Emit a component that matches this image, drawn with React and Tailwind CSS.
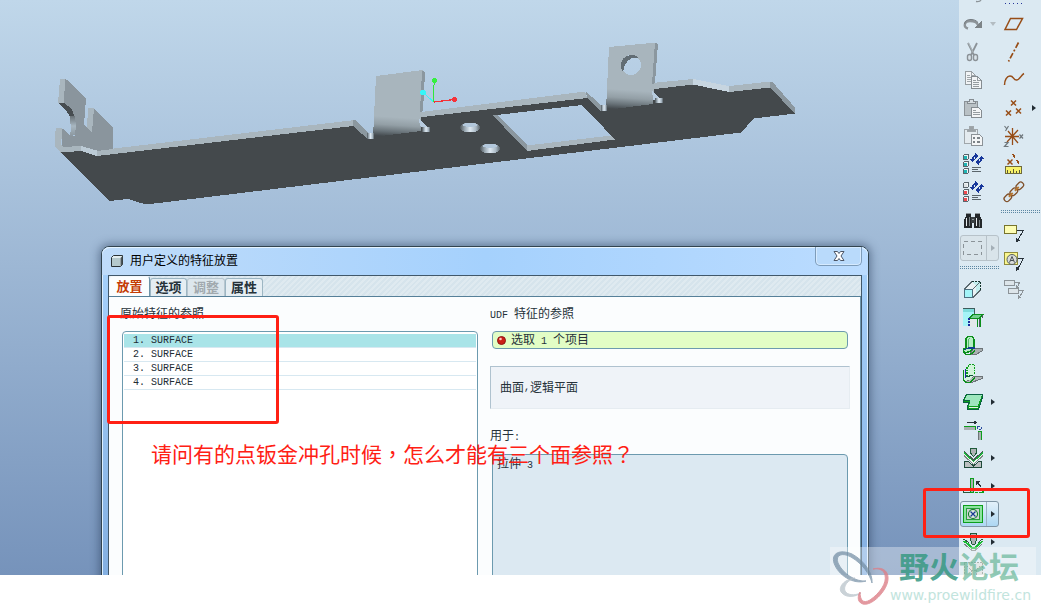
import React from "react";

const CJK = "font-['Liberation_Sans','Noto_Sans_CJK_SC',sans-serif]";

/* ---------- toolbar glyphs, all on a 24 x 24 grid ---------- */

const Svg = ({ children }) => (
  <svg viewBox="0 0 24 24" className="h-6 w-6 shrink-0" fill="none" stroke="none" shapeRendering="crispEdges">
    {children}
  </svg>
);

const Redo = () => (
  <Svg>
    <path d="M7 16.500C2 15 3 9 9 9C13 9 16 10 17 13" stroke="#8d9499" strokeWidth="2.4" shapeRendering="auto" />
    <path d="M3.500 12C4 8.500 7 7.500 10 7.500C13 7.500 15 8.500 17 10.500" stroke="#747b80" strokeWidth="1" shapeRendering="auto" />
    <path d="M21 9V16H13Z" fill="#7d8488" />
  </Svg>
);

const Scissors = () => (
  <Svg>
    <path d="M7 3L13 15M16 3L10 15" stroke="#8b9297" strokeWidth="1.8" shapeRendering="auto" />
    <path d="M7.5 3L12.5 13" stroke="#b8c0c4" strokeWidth="0.8" shapeRendering="auto" />
    <rect x="6.5" y="14.5" width="4" height="6" rx="2" stroke="#8b9297" fill="#d9e3e9" strokeWidth="1.4" shapeRendering="auto" />
    <rect x="12.5" y="14.5" width="4" height="6" rx="2" stroke="#8b9297" fill="#d9e3e9" strokeWidth="1.4" shapeRendering="auto" />
  </Svg>
);

const Copy = () => (
  <Svg>
    <path d="M4 3.500H10.500L14.500 7.500V16.500H4Z" fill="#f1f4f6" stroke="#969da1" />
    <path d="M10.500 3.500V7.500H14.500M6 7.500H9M6 9.500H11M6 11.500H11M6 13.500H11" stroke="#a0a7ab" />
    <path d="M10.500 8.500H16.500L20.500 12.500V20.500H10.500Z" fill="#f1f4f6" stroke="#858c91" />
    <path d="M16.500 8.500V12.500H20M12 12.500H15M12 14.500H18M12 16.500H18M12 18.500H18" stroke="#959ca0" />
  </Svg>
);

const Paste = () => (
  <Svg>
    <path d="M3.500 5.500H16.500V19.500H3.500Z" fill="#b9c1c5" stroke="#8b9297" />
    <path d="M6.500 7.500V5.500H8.500V3.500H12.500V5.500H14.500V7.500Z" fill="#d6dde1" stroke="#858c91" />
    <path d="M10.500 11.500H17.500L20.500 14.500V21.500H10.500Z" fill="#f3f5f6" stroke="#858c91" />
    <path d="M12 14.500H15M12 16.500H19M12 18.500H19" stroke="#959ca0" />
  </Svg>
);

const PasteSpecial = () => (
  <Svg>
    <path d="M3.500 5.500H16.500V19.500H3.500Z" fill="#e4ebef" stroke="#a0a7ab" />
    <path d="M6.500 7.500V5.500H8.500V2.500H12.500V5.500H14.500V7.500Z" fill="#9ba2a6" stroke="#a0a7ab" />
    <path d="M10.500 10.500H18.500L21.500 13.500V21.500H10.500Z" fill="#f3f5f6" stroke="#8b9297" />
    <path d="M12 14H14M16 14H19M12 18H14M16 18H19" stroke="#7c8388" strokeWidth="2" />
  </Svg>
);

const Cube = ({ y, fill }) => (
  <g>
    <path d={`M2.500 ${y + 1.500}L3.500 ${y + 0.500}H7.500V${y + 4.500}L6.500 ${y + 5.500}H2.500Z`} fill="#f0f4f5" stroke="#59656c" />
    <rect x="3" y={y + 2} width="3" height="3" fill={fill} />
  </g>
);

const Regenerate = ({ colors }) => (
  <Svg>
    <Cube y={2} fill={colors[0]} />
    <Cube y={9} fill={colors[1]} />
    <Cube y={16} fill={colors[2]} />
    <path d="M11.500 8C11.500 5.500 12.500 4 15 4" stroke="#17379b" strokeWidth="1.600" />
    <path d="M14 1V7L18 4Z" fill="#17379b" />
    <path d="M20.500 6C20.500 8.500 19.500 10 17 10" stroke="#17379b" strokeWidth="1.600" />
    <path d="M18 7V13L14 10Z" fill="#17379b" />
    <path d="M9 7H14L11.500 10ZM18 7L20.500 4L23 7Z" fill="#17379b" />
    <path d="M11 15.500H20M11 17.500H17M11 19.500H20" stroke="#5b656b" />
  </Svg>
);

const Binoculars = () => (
  <Svg>
    <path d="M5 5H10V9H11V20H3V12L5 8ZM14 5H19V8L21 12V20H13V9H14Z" fill="#24282b" />
    <path d="M10 9H14V15H10Z" fill="#3b4144" />
    <path d="M5.500 10V18M15.500 10V18" stroke="#e8edf0" strokeWidth="1.500" />
    <path d="M8.500 9V18M18.500 12V19" stroke="#7b8488" />
    <path d="M5 5.500H10M14 5.500H19M11 11.500H13" stroke="#8f979b" />
  </Svg>
);

const SelectBox = () => (
  <Svg>
    <rect x="2.500" y="5.500" width="18" height="13" stroke="#8b9398" strokeDasharray="4 3" />
  </Svg>
);

const Extrude = () => (
  <Svg>
    <path d="M3.500 11.500L11.500 3.500H19.500V11.500L11.500 19.500V11.500Z" fill="#e9f2f5" />
    <path d="M12 4H19V11L15 15V8Z" fill="#c2eeee" />
    <path d="M3.500 11L11 3.500M12 11L19 4M12 19.500L19.500 12" stroke="#5a686e" />
    <path d="M11 3.500H19.500V12" stroke="#14352f" strokeDasharray="2 1" />
    <rect x="3.500" y="11.500" width="8" height="8" fill="#a3f4f8" stroke="#4d6f80" />
  </Svg>
);

const FlatWall = () => (
  <Svg>
    <path d="M2 5L5 2.500H14V9H10L8 12V20H2Z" fill="#a5f3f7" />
    <path d="M2 3H14V6H2Z" fill="#7fdcdc" />
    <path d="M2 2.500H14M13.500 2.500V8" stroke="#3d5c5c" />
    <path d="M9 13H15V21H9Z" fill="#e3e8ea" />
    <path d="M8 12.500L12 8.500H22L18 12.500Z" fill="#72cf8f" stroke="#0c8f1c" strokeWidth="1.400" />
    <path d="M7.500 12V21" stroke="#1b2d9b" strokeWidth="2" strokeDasharray="2 1" />
    <path d="M16.500 13V21M19.500 12V21" stroke="#0c8f1c" strokeWidth="1.500" />
    <path d="M18 13V21M21.500 9V12" stroke="#4f5a60" />
  </Svg>
);

const Flange = () => (
  <Svg>
    <path d="M12 14.500H21.500V16.500L15 20.500H9Z" fill="#a9afb2" stroke="#6d7478" />
    <path d="M5 14V5L7 2.500H11L13 5V13L10 17L4 19L2.500 17L3 15Z" fill="#b6efc4" stroke="#0c8f1c" strokeWidth="1.400" />
    <path d="M7 14V6L9 4" stroke="#55bd70" />
    <path d="M3 16L7 14H14" stroke="#123f8d" strokeWidth="1.300" />
    <path d="M3 18L5 20.500H9L14 17" stroke="#0c8f1c" strokeWidth="1.500" />
  </Svg>
);

const Extend = () => (
  <Svg>
    <path d="M12 14.500H21.500V16.500L16 18.500L9 21L5 20Z" fill="#b3b9bc" stroke="#6d7478" />
    <path d="M5 5L8 2.500H14V12L10 17L4 19Z" fill="#d3f4dc" />
    <path d="M6 14V5L9 2.500H13.500V13" stroke="#0c9f1c" strokeWidth="1.300" strokeDasharray="1.500 1" />
    <path d="M4.500 7V16" stroke="#1b2da0" strokeWidth="1.600" />
    <path d="M2.500 8V18L5 20.500H9L14 16" stroke="#0c8f1c" strokeWidth="1.500" />
    <path d="M5 15L12 13" stroke="#14543a" />
  </Svg>
);

const FlatPattern = () => (
  <Svg>
    <path d="M5.500 4.500H21.500V7L17.500 19.500H6.500V16L8.500 12.500H2.500V9.500Z" fill="#0c9f1c" stroke="#0a5f43" />
    <path d="M6 5H21L16.500 16H8L9.500 10H3.500Z" fill="#9de6bd" />
    <path d="M7.500 17.500H16.500" stroke="#e4f3e9" />
    <path d="M3 10.500H9" stroke="#0a5f43" />
  </Svg>
);

const BendLine = () => (
  <Svg>
    <path d="M6 4.500H15" stroke="#28323a" />
    <path d="M12.500 2L16 4.500L12.500 7Z" fill="#28323a" />
    <path d="M3 8H15V12H3Z" fill="#a9afb2" />
    <path d="M3 8.500H14.500V12" stroke="#0c9f1c" />
    <path d="M16.500 8.500H20.500V11.500H16.500Z" stroke="#2a4da0" strokeDasharray="2 2" />
    <path d="M17 14H21V22H17Z" fill="#a9afb2" />
    <path d="M20.500 13.500V22M17 13.500H21" stroke="#0c9f1c" />
    <path d="M17.500 14V22" stroke="#6d7478" />
  </Svg>
);

const Vee = ({ y, color, width = 1.4 }) => (
  <path d={`M3 ${y}L12.500 ${y + 9}L22 ${y}`} stroke={color} strokeWidth={width} />
);

const Bend = () => (
  <Svg>
    <path d="M3.500 21.500V15.500H7.500L12.500 20L17.500 15.500H20.500V21.500Z" fill="#bcc0c1" stroke="#1f4a3a" />
    <Vee y={7.5} color="#f0f5f2" width={1.5} />
    <Vee y={5} color="#4b5554" width={1} />
    <Vee y={6.5} color="#19b23a" width={1.2} />
    <Vee y={9.5} color="#7f8a84" width={1} />
    <path d="M9.500 2V7L12.500 10.500L15.500 7V2Z" fill="#aeb3b5" stroke="#1f5b3a" />
  </Svg>
);

const EdgeBend = () => (
  <Svg>
    <path d="M9.500 4.500H12.500V18H9.500Z" fill="#a9afb2" stroke="#0c9f1c" />
    <path d="M2.500 16V18.500H9" stroke="#28593a" />
    <path d="M13.500 18.500H22V16" stroke="#0c9f1c" strokeWidth="1.400" strokeDasharray="3 1" />
    <path d="M16 8L20 13" stroke="#28323a" strokeWidth="1.300" />
    <path d="M15 7H19L15 11Z" fill="#28323a" />
  </Svg>
);

const Punch = () => (
  <Svg>
    <rect x="2.500" y="3.500" width="19" height="17" fill="#8ce3a1" stroke="#0c9f1c" strokeWidth="1.500" />
    <rect x="5.500" y="6.500" width="13" height="11" fill="#ced2d3" stroke="#289f3e" />
    <circle cx="12" cy="12" r="4.500" fill="#dbe6df" stroke="#0b7a24" strokeWidth="1.100" shapeRendering="auto" />
    <path d="M9.500 9.500L14.500 14.500M14.500 9.500L9.500 14.500" stroke="#173b91" strokeWidth="1.200" shapeRendering="auto" />
  </Svg>
);

const Form = () => (
  <Svg>
    <path d="M2.500 9L7 12L10 17H15L18 12L21.500 9" stroke="#2b5c3c" />
    <path d="M2.500 11L7 14L11 18H14L18 14L21.500 11" stroke="#19bd32" strokeWidth="1.600" />
    <path d="M3 14L7 17L11 20.500H14L18 17L21 14" stroke="#7b8583" />
    <path d="M9.500 3V9L11 14H14L15.500 9V3Z" fill="#aeb3b5" stroke="#1f5b3a" />
  </Svg>
);

const Pattern = () => (
  <Svg>
    <rect x="3.500" y="4.500" width="18" height="16" fill="#d7dcda" stroke="#7f8c86" strokeDasharray="2 1" />
    <path d="M6 8L10 12H15L19 8M6 17H19M10 12V17M15 12V17" stroke="#7f8c86" strokeDasharray="2 1" />
  </Svg>
);

const Plane = () => (
  <Svg>
    <path d="M8.500 6.500H20.500L14.500 17.500H3Z" stroke="#974d17" strokeWidth="1.500" shapeRendering="auto" />
  </Svg>
);

const Axis = () => (
  <Svg>
    <path d="M16.500 2.500L6.500 21.500" stroke="#974d17" strokeWidth="1.700" strokeDasharray="6 2 2 2" shapeRendering="auto" />
  </Svg>
);

const Curve = () => (
  <Svg>
    <path d="M2.500 17C2.500 12 5 8 8 8C12 8 11 12 14.500 12C18 12 19 7 22 5.500" stroke="#974d17" strokeWidth="1.500" shapeRendering="auto" />
  </Svg>
);

const Cross = ({ x, y, r = 2.5 }) => (
  <path
    d={`M${x - r} ${y - r}L${x + r} ${y + r}M${x + r} ${y - r}L${x - r} ${y + r}`}
    stroke="#974d17"
    strokeWidth="1.500"
    shapeRendering="auto"
  />
);

const Points = () => (
  <Svg>
    <Cross x={11.5} y={7} />
    <Cross x={6.5} y={17} />
    <Cross x={16.5} y={15} />
  </Svg>
);

const Csys = () => (
  <Svg>
    <path d="M3 12.500H17M10.500 4V21M6 7L16 19M16 6L5 18" stroke="#974d17" strokeWidth="1.300" shapeRendering="auto" />
    <path
      d="M2.500 2L4.500 4.500M6.500 2L3.500 7M17.500 10.500L21 14.500M21 10.500L17.500 14.500M2.500 18.500H6L2.500 22.500H6.500"
      stroke="#6f777c"
      strokeWidth="1.200"
      shapeRendering="auto"
    />
  </Svg>
);

const Ruler = () => (
  <Svg>
    <Cross x={8} y={10} />
    <path d="M11 2L13 5.500M15 8L17 11.500" stroke="#974d17" strokeWidth="1.600" />
    <rect x="3.500" y="14.500" width="16" height="7" fill="#f8f36a" stroke="#6e6a3c" />
    <path d="M5.500 18V21M8.500 19V21M11.500 17V21M14.500 19V21M17.500 18V21" stroke="#5c5937" />
  </Svg>
);

const Chain = () => (
  <Svg>
    <g transform="rotate(-45 12 12)" stroke="#80502a" strokeWidth="1.300" shapeRendering="auto">
      <rect x="-0.500" y="9" width="8" height="5.500" rx="2.500" />
      <rect x="8" y="9" width="8" height="5.500" rx="2.500" />
      <rect x="16.500" y="9" width="8" height="5.500" rx="2.500" />
      <path d="M5 11.700H10.500M13.500 11.700H19" stroke="#b9782f" strokeWidth="2" />
    </g>
  </Svg>
);

const Note = () => (
  <Svg>
    <rect x="2.500" y="3.500" width="12" height="8" fill="#fdfdb4" stroke="#77742c" />
    <path d="M15 8.500H21.500L15 19" stroke="#28323a" />
    <path d="M14 20.500V16L18 18.500Z" fill="#28323a" />
  </Svg>
);

const Symbol = () => (
  <Svg>
    <rect x="2.500" y="2.500" width="13" height="12" fill="#faf78f" stroke="#8f8b3d" />
    <circle cx="10" cy="9.500" r="5" fill="#d9dcd9" stroke="#555e62" shapeRendering="auto" />
    <path d="M7.500 12.500L10 6.500L12.500 12.500M8.500 10.500H11.500" stroke="#454d51" shapeRendering="auto" />
    <path d="M16 8.500H21.500L15 20" stroke="#28323a" />
    <path d="M14 21V16.500L18 19Z" fill="#28323a" />
  </Svg>
);

const Leaders = () => (
  <Svg>
    <rect x="2.500" y="2.500" width="10" height="5" fill="#dde5ea" stroke="#8c9398" />
    <rect x="6.500" y="10.500" width="10" height="5" fill="#dde5ea" stroke="#8c9398" />
    <path d="M13 4.500H17.500L15.500 9M17 12.500H21.500L17 20" stroke="#8c9398" />
    <path d="M14 6.500V10H17ZM16 21V17L19.500 19.500Z" fill="#8c9398" />
  </Svg>
);

/* ---------- toolbar ---------- */

const leftTop = [
  { label: "重做", icon: <Redo />, arrow: "down" },
  { label: "剪切", icon: <Scissors /> },
  { label: "复制", icon: <Copy /> },
  { label: "粘贴", icon: <Paste /> },
  { label: "选择性粘贴", icon: <PasteSpecial /> },
  { label: "再生", icon: <Regenerate colors={["#1fb5b5", "#1fb5b5", "#1fb5b5"]} /> },
  { label: "再生管理器", icon: <Regenerate colors={["#dfe4e6", "#ee4a50", "#ee4a50"]} /> },
  { label: "查找", icon: <Binoculars /> },
  { label: "选取框", icon: <SelectBox />, arrow: "muted", frame: "border-[#b7c2c9] bg-[#d9e4ea]", split: "border-[#b7c2c9]" },
];

const leftBottom = [
  { label: "拉伸", icon: <Extrude /> },
  { label: "平整壁", icon: <FlatWall /> },
  { label: "法兰壁", icon: <Flange /> },
  { label: "延伸壁", icon: <Extend /> },
  { label: "平整形态", icon: <FlatPattern />, arrow: "right" },
  { label: "折弯线", icon: <BendLine /> },
  { label: "折弯", icon: <Bend />, arrow: "right" },
  { label: "边折弯", icon: <EdgeBend />, arrow: "right" },
  {
    label: "冲孔",
    icon: <Punch />,
    arrow: "right",
    frame: "border-[#7f95a5] bg-linear-to-b from-[#e3f1fa] to-[#add7f3]",
    split: "border-[#9bb3c4]",
  },
  { label: "成形", icon: <Form />, arrow: "right" },
  { label: "阵列", icon: <Pattern /> },
];

const rightTop = [
  { label: "基准平面", icon: <Plane /> },
  { label: "基准轴", icon: <Axis /> },
  { label: "基准曲线", icon: <Curve /> },
  { label: "基准点", icon: <Points />, arrow: "right" },
  { label: "坐标系", icon: <Csys /> },
  { label: "分析特征", icon: <Ruler /> },
  { label: "参照链", icon: <Chain /> },
];

const rightBottom = [
  { label: "注释", icon: <Note /> },
  { label: "符号", icon: <Symbol /> },
  { label: "引线", icon: <Leaders /> },
];

function Arrow({ kind }) {
  if (kind === "down")
    return (
      <svg viewBox="0 0 6 4" className="h-1 w-1.5" fill="#b3bcc2">
        <path d="M0 0H6L3 4Z" />
      </svg>
    );
  return (
    <svg viewBox="0 0 4 6" className="h-1.5 w-1" fill={kind === "muted" ? "#a4afb6" : "#222c33"}>
      <path d="M0 0L4 3L0 6Z" />
    </svg>
  );
}

function Tool({ label, icon, arrow, frame = "border-transparent", split = "border-transparent" }) {
  return (
    <li className="flex h-7 shrink-0 items-center">
      <button type="button" aria-label={label} className={`flex h-[26px] w-[39px] items-center overflow-hidden rounded-[3px] border ${frame}`}>
        {icon}
        <span className={`ml-px flex h-full flex-1 items-center justify-center border-l pl-px ${split}`}>{arrow && <Arrow kind={arrow} />}</span>
      </button>
    </li>
  );
}

const Separator = () => (
  <li aria-hidden="true" className="h-[14px] shrink-0 pt-1">
    <div className="h-px bg-[repeating-linear-gradient(90deg,#5c87a3_0_1px,transparent_1px_2px)]" />
    <div className="mt-px h-px bg-[repeating-linear-gradient(90deg,#5c87a3_0_1px,transparent_1px_2px)]" />
  </li>
);

function Toolbars() {
  return (
    <nav aria-label="工具栏" className="flex w-[82px] shrink-0 overflow-hidden bg-[#dbe9f2]">
      <ul className="flex w-[41px] flex-col pl-px">
        <li aria-hidden="true" className="h-[10px] shrink-0 pl-[15px]">
          <svg viewBox="0 0 8 3" className="h-[3px] w-2">
            <path d="M1 1.500Q5 2 6 0" stroke="#8d9499" strokeWidth="1.300" fill="none" />
          </svg>
        </li>
        {leftTop.map((t) => <Tool key={t.label} {...t} />)}
        <Separator />
        {leftBottom.map((t) => <Tool key={t.label} {...t} />)}
      </ul>
      <ul className="flex w-[41px] flex-col pl-px">
        <li aria-hidden="true" className="h-[10px] shrink-0 pt-[3px] pl-1">
          <div className="h-px w-[18px] bg-[repeating-linear-gradient(90deg,#26369b_0_1px,transparent_1px_4px)]" />
        </li>
        {rightTop.map((t) => <Tool key={t.label} {...t} />)}
        <Separator />
        {rightBottom.map((t) => <Tool key={t.label} {...t} />)}
      </ul>
    </nav>
  );
}

/* ---------- sheet-metal part ---------- */

function Part() {
  return (
    <svg viewBox="0 0 820 220" className="h-[220px] w-[820px]" shapeRendering="crispEdges" aria-label="钣金零件">
      <defs>
        <linearGradient id="bend" x1="0" y1="0" x2="-0.050" y2="1">
          <stop offset="0" stopColor="#a8b5bd" />
          <stop offset="0.680" stopColor="#a8b5bd" />
          <stop offset="0.800" stopColor="#939fa6" />
          <stop offset="0.900" stopColor="#687278" />
          <stop offset="0.970" stopColor="#454b4f" />
          <stop offset="1" stopColor="#44494c" />
        </linearGradient>
        <linearGradient id="bore" x1="0" x2="1" y1="0" y2="0">
          <stop offset="0" stopColor="#4b5256" />
          <stop offset="0.250" stopColor="#9dabb5" />
          <stop offset="0.500" stopColor="#dfeaf3" />
          <stop offset="0.800" stopColor="#a8b7c3" />
          <stop offset="1" stopColor="#596268" />
        </linearGradient>
        <linearGradient id="notch" x1="0" x2="0" y1="0" y2="1">
          <stop offset="0" stopColor="#697278" />
          <stop offset="0.500" stopColor="#a8b7c1" />
          <stop offset="1" stopColor="#8b979f" />
        </linearGradient>
      </defs>

      <path
        fill="#44494c"
        fillRule="evenodd"
        d="M60.500 152.500L81 151L97 155.500L300 131.500L353 126L367 138L374 132L421 125L429 131.500L418 117L580 98L587 97.500L601 110.500L608 104L652 99L662 103.500L651 89.500L693 84.500L729 91.500L770 87.500L795 113.500L754 118.500L741 132.500L146 204.500L128 199L109 201ZM493 115.500L582 105L615 139.500L527 151Z"
      />

      <path fill="#a9b6be" d="M97 150.500L114 148.500L355 120L353 126L97 156Z" />
      <path fill="#8c989f" d="M353 120L355 120L370 135L367 138.500L353 126Z" />
      <path fill="#a9b6be" d="M421 112L585 91.500L587 98L418 117.500Z" />
      <path fill="#8c989f" d="M586 91.500L603 107L601 111L587 98Z" />
      <path fill="#a9b6be" d="M652 83L693 79V84.500L651 89.500Z" />
      <path fill="#c7d5e0" d="M693 79L729 86V92L693 84.500Z" />
      <path fill="#a9b6be" d="M729 86L770 81.500V87.500L729 92Z" />
      <path fill="#8b979f" d="M770 81.500H772L795 107.500V113.500L770 87.500Z" />

      <path fill="#8b979f" d="M493 115.500L497 115L528 146L527 151Z" />
      <path fill="#a9b6be" d="M527 145.500L611 135.500L615 139.500L527 151Z" />

      <path fill="#8a959d" d="M65 79L67 80L86 99L84 125L92 132L93.500 108.500L112.500 127V149L97 151L81 146.500L62 147L61 128.500H62.500L70 136H75L74 125L71 110L64 102.500Z" />
      <path fill="#a9b6be" d="M60 79H65L64 102.500H58ZM88 108H94L92 132L87 127.500ZM56 128H62.500L61 145L63 147L81 146V151L60.500 152.500L55 147V135Z" />
      <path fill="#bccbd6" d="M81 146L97 150.500V156L81 151Z" />
      <path fill="#474d51" d="M58 102.500H64L72 109.500L74.500 117H70L66.500 111Z" />
      <path fill="url(#notch)" d="M69.500 116H74.500L76 125L75 135L70 136L71 128Z" />

      <path fill="url(#bend)" d="M376 76L423 70L421 131L373 137Z" />
      <path fill="#8b979f" d="M422 70.500L425 72L423 111L420 112Z" />
      <rect x="367" y="133" width="7" height="6" fill="url(#bore)" />
      <path fill="#b7cbde" d="M418.500 118L429 129V131H425L420 126Z" />
      <rect x="422" y="127" width="8" height="5" fill="url(#bore)" />

      <path
        fill="url(#bend)"
        fillRule="evenodd"
        d="M609 47L656 42.500L653 104L606 110ZM641 65A10 10 0 1 0 621 65A10 10 0 1 0 641 65Z"
      />
      <path fill="#8b979f" d="M655 42.500L658 44L655 83L652 84Z" />
      <path fill="#626d74" d="M621 68C620 59 626 54 634 55L641 59C635 55 624 59 623 72Z" />
      <rect x="601" y="105" width="6" height="6" fill="url(#bore)" />
      <path fill="#b7cbde" d="M651.500 90L662 101V103H657L653 98Z" />
      <rect x="655" y="98" width="8" height="5" fill="url(#bore)" />

      <ellipse cx="470" cy="127.500" rx="10" ry="5" fill="url(#bore)" />
      <ellipse cx="470" cy="125" rx="7" ry="2" fill="#b3c8dc" />
      <ellipse cx="490" cy="148.500" rx="10" ry="5" fill="url(#bore)" />
      <ellipse cx="490" cy="146" rx="7" ry="2" fill="#b3c8dc" />

      <path d="M433.500 102V88L434.500 82" stroke="#2fe83a" />
      <path d="M434 102L454 99.500" stroke="#f32f35" strokeWidth="1.200" />
      <path d="M433 101.500L424 93" stroke="#37f5f8" />
      <circle cx="434.500" cy="80.500" r="2.500" fill="#35f03f" />
      <circle cx="454.500" cy="99.500" r="2.500" fill="#f5333a" />
      <circle cx="423" cy="92.500" r="2.700" fill="#37f5f8" />
    </svg>
  );
}

/* ---------- feature placement dialog ---------- */

const Half = ({ children }) => <span className="whitespace-pre font-['Liberation_Mono',monospace] text-[10px]">{children}</span>;

const tabs = [
  { name: "放置", look: "h-5 border-[#f4f8fb] bg-[#fbfdfe] text-[#c43c05] w-[41px] border-r-[#6d93a9]" },
  { name: "选项", look: "h-[18px] border-[#9db6c3] bg-[#e5eef3] text-[#26323a] w-[37px]" },
  { name: "调整", look: "h-[18px] border-[#b7c6cf] bg-[#dde7ed] text-[#a1a9ae] w-[38px]" },
  { name: "属性", look: "h-[18px] border-[#9db6c3] bg-[#e5eef3] text-[#26323a] w-[38px]" },
];

function Dialog() {
  return (
    <section
      role="dialog"
      aria-labelledby="dialog-title"
      className="absolute top-[246px] -bottom-4 left-[101px] flex w-[768px] flex-col rounded-t-lg border border-[#32444f] bg-linear-to-b from-[#a8d3fd] to-[#82aee0] shadow-[0_0_9px_2px_rgba(40,60,90,0.5),inset_0_0_0_1px_#dcefff]"
    >
      <header className="flex h-7 shrink-0 items-start justify-between rounded-t-lg bg-linear-to-r from-[#bfdcfa] via-[#a5d1fd] to-[#bbdcff] pr-1.5 pl-2 shadow-[inset_0_1px_0_#e6f4ff]">
        <div className="flex h-7 items-center gap-1.5">
          <svg viewBox="0 0 14 14" className="h-3.5 w-3.5">
            <path d="M1.500 3.500L3.500 1.500H12.500V10.500L10.500 12.500H1.500Z" fill="#e4eef0" stroke="#2b3336" />
            <path d="M10.500 12V4L12.500 2V10.500Z" fill="#4b5558" />
            <rect x="2" y="4" width="8" height="8" fill="#b5c9cc" />
          </svg>
          <h1 id="dialog-title" className="text-xs text-black">用户定义的特征放置</h1>
        </div>
        <button
          type="button"
          aria-label="关闭"
          className="flex h-[19px] w-[47px] items-center justify-center rounded-b-[5px] border border-t-0 border-[#7e9cb9] bg-[#b9dafb] shadow-[inset_0_0_0_1px_#d5eaff]"
        >
          <svg viewBox="0 0 12 10" className="h-2.5 w-3">
            <path d="M1 0.500H4.500L6 2.500L7.500 0.500H11L8 5L11 9.500H7.500L6 7.500L4.500 9.500H1L4 5Z" fill="#fff" stroke="#4d5666" />
          </svg>
        </button>
      </header>

      <div className="mx-[6px] flex flex-1 flex-col border border-b-0 border-[#41586a] bg-[#fbfdfe]">
        <div
          role="tablist"
          className="flex h-[21px] shrink-0 items-end border-b border-[#568099] bg-[repeating-linear-gradient(135deg,#d6e4ec_0_2px,#dfeaf0_2px_4px)]"
        >
          {tabs.map((t, i) => (
            <button
              key={t.name}
              type="button"
              role="tab"
              aria-selected={i === 0}
              disabled={i === 2}
              className={`flex items-center justify-center rounded-t-[3px] border border-b-0 text-[13px] leading-4 font-bold ${t.look}`}
            >
              {t.name}
            </button>
          ))}
        </div>

        <div className="grid flex-1 grid-cols-[356px_360px] justify-between border-r border-[#6f96ad] pr-[10px] pl-[13px]">
          <div className="flex flex-col pt-2">
            <h2 className="-ml-0.5 h-[18px] text-xs leading-[18px] text-[#26323a]">原始特征的参照</h2>
            <ul className="mt-2 flex-1 rounded-t border border-[#6c9aaf] bg-white px-px pt-0.5">
              {[1, 2, 3, 4].map((n) => (
                <li key={n}>
                  <button
                    type="button"
                    className={`block h-3.5 w-full border-b border-[#d7e8f1] pl-[9px] text-left font-['Liberation_Mono',monospace] text-[10px] leading-[14px] text-[#222d34] ${n === 1 ? "bg-[#a9e4e8]" : "bg-white"}`}
                  >
                    {n}. SURFACE
                  </button>
                </li>
              ))}
            </ul>
          </div>

          <div className="flex flex-col pt-2 text-xs text-[#26323a]">
            <h2 id="udf-refs" className="h-[18px] leading-[18px]">
              <Half>UDF </Half>特征的参照
            </h2>
            <button
              type="button"
              aria-describedby="udf-refs"
              className="mx-0.5 mt-2 flex h-[18px] items-center gap-[5px] rounded border border-[#6c9aaf] bg-[#e2fdc5] pl-1 text-left leading-4"
            >
              <svg viewBox="0 0 9 9" className="h-[9px] w-[9px]">
                <circle cx="4.500" cy="4.500" r="4" fill="#cc1f17" stroke="#8c1712" />
                <circle cx="3.500" cy="3" r="1.300" fill="#ffc9bd" />
              </svg>
              <span className="pt-px">
                选取<Half> 1 </Half>个项目
              </span>
            </button>
            <p className="mt-[17px] flex h-[43px] items-center border border-[#e6ecf1] border-t-[#afc2cf] border-l-[#afc2cf] bg-[#eff3f8] pt-px pl-[9px]">
              曲面<Half>,</Half>逻辑平面
            </p>
            <h2 className="mt-[18px] h-[18px] leading-[18px]">
              用于<Half>:</Half>
            </h2>
            <div className="mx-0.5 mt-[9px] flex-1 rounded-t border border-[#6c9aaf] bg-[#dce9f2] pl-1 leading-[18px]">
              拉伸<Half> 3</Half>
            </div>
          </div>
        </div>
      </div>
    </section>
  );
}

/* ---------- forum watermark ---------- */

function Watermark() {
  return (
    <aside className="pointer-events-none absolute right-[5px] bottom-0 h-[67px] w-[206px] bg-white/35">
      <svg viewBox="0 0 60 62" className="absolute top-0 left-0 h-[62px] w-[60px]" fill="none">
        <path d="M42 36C43 27 35 14 22 7C10 2 1 6 4 16C8 28 23 38 36 34C26 35 13 27 8 16C5 8 12 5 21 10C33 17 40 28 42 36Z" fill="#708ba2" stroke="#708ba2" opacity="0.700" />
        <path d="M25 31C14 32 7 41 12 46C16 51 26 50 31 46C24 49 17 48 15 44C13 39 18 33 25 31Z" fill="#b4bfc7" stroke="#b4bfc7" opacity="0.700" />
        <path d="M43 22C58 18 62 31 54 43C47 54 36 60 31 56C27 54 28 48 30 45C30 53 33 57 40 53C50 46 57 36 55 28C54 23 49 21 43 22Z" fill="#dd7f88" stroke="#dd7f88" opacity="0.800" />
      </svg>
      <div className="flex flex-col items-end pr-[5px]">
        <p className="mr-3 h-9 text-[30px] leading-[42px] font-bold text-[#65b596]/70">
          <span className="text-[#3c9b86]/90">野火</span>论坛
        </p>
        <p className="font-['DejaVu_Sans',sans-serif] text-sm leading-6 text-[#c2e4dd]">www.proewildfire.cn</p>
      </div>
    </aside>
  );
}

/* Traditional-Chinese punctuation sits in the middle of its em box. */
const Mark = ({ children }) => <span className="font-['Noto_Sans_CJK_TC',sans-serif]">{children}</span>;

export default function App() {
  return (
    <div className={`relative flex h-screen flex-col overflow-hidden bg-white ${CJK}`}>
      <div className="flex min-h-0 flex-1 overflow-hidden">
        <main className="relative min-w-0 flex-1 overflow-hidden bg-linear-to-b from-[#c0d7ea] to-[#7693bb]">
          <Part />
          <Dialog />
        </main>
        <Toolbars />
      </div>
      <footer className="h-[39px] shrink-0 bg-white" />

      <div className="pointer-events-none absolute top-[315px] left-[107px] h-[109px] w-[172px] rounded-[3px] border-3 border-[#ff2014]" />
      <div className="pointer-events-none absolute top-[488px] right-[11px] h-[50px] w-[107px] rounded-[3px] border-3 border-[#ff2014]" />
      <p className="pointer-events-none absolute top-[438px] left-[151px] text-[21px] leading-[30px] whitespace-nowrap text-[#ff2014]">
        请问有的点钣金冲孔时候<Mark>，</Mark>怎么才能有三个面参照<Mark>？</Mark>
      </p>
      <Watermark />
    </div>
  );
}
